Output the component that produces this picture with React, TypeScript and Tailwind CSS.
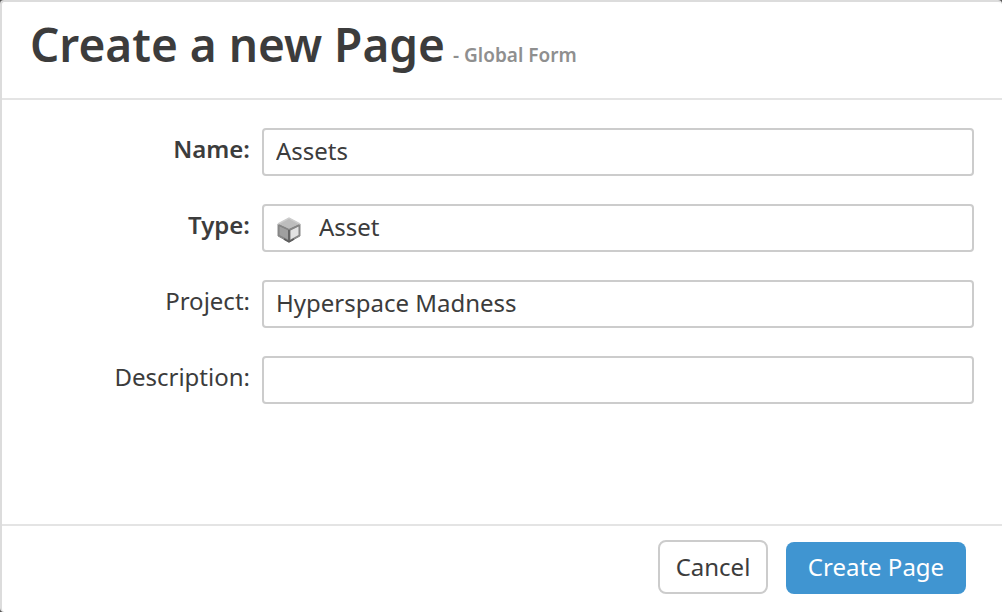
import { clsx } from "clsx";

type Field = {
  id: string;
  label: string;
  value: string;
  required?: boolean;
  icon?: boolean;
};

const fields: Field[] = [
  { id: "name", label: "Name:", value: "Assets", required: true },
  { id: "type", label: "Type:", value: "Asset", required: true, icon: true },
  { id: "project", label: "Project:", value: "Hyperspace Madness" },
  { id: "description", label: "Description:", value: "" },
];

function CubeIcon({ className }: { className?: string }) {
  return (
    <svg viewBox="0 0 24 26" className={className} aria-hidden="true">
      <path d="M12 1 23 7v12l-11 6L1 19V7z" fill="#858585" />
      <path d="M12 1 23 7l-11 5L1 7z" fill="#bdbdbd" />
      <path d="M2.500 9 11 13v9.500L2.500 18z" fill="#a0a0a0" />
      <path d="M13.500 13.500 21.500 9.500V18l-8 4.500z" fill="#e2e2e2" />
      <path d="M1 7v12l11 6 11-6V7" fill="none" stroke="#8a8a8a" strokeLinejoin="round" />
      <path d="M1.500 8l10.500 5 10.500-5" fill="none" stroke="#858585" strokeWidth="1.500" />
      <path d="M12 13v12" stroke="#5c5c5c" strokeWidth="1.500" />
      <path d="M7 22l5 3 5-3" fill="none" stroke="#5c5c5c" strokeWidth="1.500" />
      <path d="M1 7l11-6 11 6" fill="none" stroke="#cdcdcd" strokeWidth="1.500" />
    </svg>
  );
}

function FormRow({ field }: { field: Field }) {
  return (
    <div className="flex items-center gap-3">
      <label
        htmlFor={field.id}
        className={clsx("w-[248px] shrink-0 pb-1.5 text-right", field.required && "font-semibold")}
      >
        {field.label}
      </label>
      <div className="relative min-w-0 flex-1">
        {field.icon && <CubeIcon className="absolute top-[13px] left-[15px] h-[26px] w-6" />}
        <input
          id={field.id}
          type="text"
          defaultValue={field.value}
          className={clsx(
            "block h-12 w-full rounded-sm border-2 border-[#cccccc] bg-white pr-3 pb-1 outline-none focus:border-[#4095d1]",
            field.icon ? "pl-[55px]" : "pl-3"
          )}
        />
      </div>
    </div>
  );
}

export default function App() {
  return (
    <div className="min-h-screen bg-[#555555] font-['Noto_Sans','Open_Sans',sans-serif] text-2xl text-[#3c3c3c]">
      <form
        className="flex min-h-screen flex-col rounded-t-sm rounded-bl-sm border-t-2 border-l-2 border-[#dcdcdc] bg-white"
        onSubmit={(e) => e.preventDefault()}
      >
        <header className="flex h-[98px] items-baseline gap-2 border-b-2 border-[#e4e4e4] pt-2.5 pl-7">
          <h1 className="text-[46px] leading-[64px] font-semibold">Create a new Page</h1>
          <span className="text-[19px] font-semibold text-[#8f8f8f]">- Global Form</span>
        </header>

        <div className="flex flex-1 flex-col gap-7 py-7 pr-7">
          {fields.map((field) => (
            <FormRow key={field.id} field={field} />
          ))}
        </div>

        <footer className="flex items-end justify-end gap-[18px] border-t-2 border-[#e4e4e4] pt-3.5 pr-9 pb-[18px]">
          <button type="button" className="h-[54px] w-[110px] rounded-lg border-2 border-[#cccccc] bg-white">
            Cancel
          </button>
          <button type="submit" className="h-[52px] w-[180px] rounded-lg bg-[#4095d1] pb-0.5 text-white">
            Create Page
          </button>
        </footer>
      </form>
    </div>
  );
}
